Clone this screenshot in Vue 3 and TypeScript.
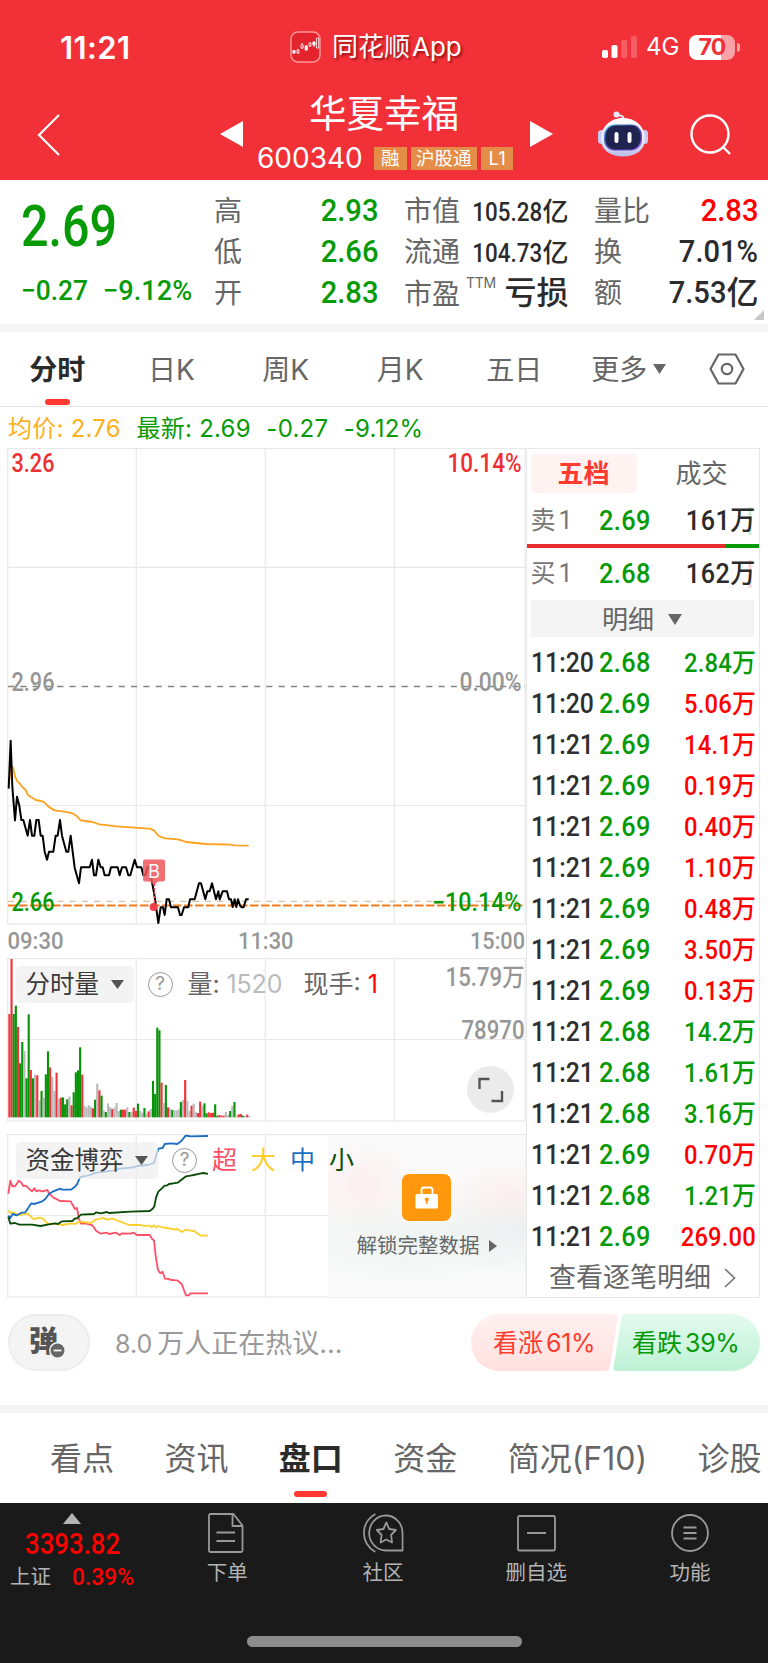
<script setup lang="ts">
type Tone = 'up' | 'down'

interface Trade {
  time: string
  price: string
  volume: string
  tone: Tone
}

const trade = (time: string, price: string, volume: string, tone: Tone): Trade => ({ time, price, volume, tone })

const trades: Trade[] = [
  trade('11:20', '2.68', '2.84万', 'down'),
  trade('11:20', '2.69', '5.06万', 'up'),
  trade('11:21', '2.69', '14.1万', 'up'),
  trade('11:21', '2.69', '0.19万', 'up'),
  trade('11:21', '2.69', '0.40万', 'up'),
  trade('11:21', '2.69', '1.10万', 'up'),
  trade('11:21', '2.69', '0.48万', 'up'),
  trade('11:21', '2.69', '3.50万', 'up'),
  trade('11:21', '2.69', '0.13万', 'up'),
  trade('11:21', '2.68', '14.2万', 'down'),
  trade('11:21', '2.68', '1.61万', 'down'),
  trade('11:21', '2.68', '3.16万', 'down'),
  trade('11:21', '2.69', '0.70万', 'up'),
  trade('11:21', '2.68', '1.21万', 'down'),
  trade('11:21', '2.69', '269.00', 'up'),
]

const periods = ['分时', '日K', '周K', '月K', '五日']
const sections = ['看点', '资讯', '盘口', '资金', '简况(F10)', '诊股']

// One token per minute: colour code (r/g/n) followed by the bar height in thirds of a pixel.
const volumeData =
  'r310 r475 g310 g335 r271 g162 g226 n199 g117 g309 r142 g117 n128 r126 n51 g79 n59 g129 g198 r150 n121 n79 r134 n56 r59 g60 g39 g54 n62 r36 g75 g135 g141 g210 r128 n34 n30 n36 n32 r27 g53 n101 r81 g65 n21 g16 n42 n31 r25 n29 n43 n19 g23 r23 r23 n30 g16 n16 r29 r19 g41 n19 n14 g28 n12 r18 n25 g109 g70 g269 g261 r104 n43 g97 r30 n26 g22 n21 n21 n24 g46 n52 r112 n49 n19 r35 n41 n15 r13 r47 n35 g42 g12 r15 r13 r14 g39 g5 r7 r5 r5 n16 n7 g19 n34 g46 n5 r9 r10 g5 n4 r8 n4'
const barColors: Record<string, string> = { r: '#f0333a', g: '#089408', n: '#b9b9b9' }
const bars = volumeData.split(' ').map((token, i) => {
  const height = Number(token.slice(1))
  return { x: 25 + i * 6.43, y: 592 - height, height, color: barColors[token[0]] }
})

const pricePath =
  'M26 266L32 122L37 260L45 361L51 290L58 317L64 360L70 360L83 407L90 360L96 407L103 407L109 360L116 360L122 407L128 407L134 455L141 479L147 455L160 455L167 407L173 407L180 360L186 407L199 455L205 455L212 407L218 455L224 503L237 550L243 502L269 502L276 479L282 526L288 526L295 479L302 502L308 502L314 526L327 526L333 502L353 502L359 526L366 502L378 502L385 526L391 526L404 479L411 502L424 502L430 526L436 526L443 502L449 502L455 540L464 590L468 620L475 669L482 622L489 622L494 645L500 598L507 598L513 622L534 622L540 645L545 645L552 622L565 622L570 598L584 598L597 550L603 550L616 598L622 574L629 574L636 550L648 598L655 574L659 598L668 574L681 574L687 598L693 598L698 621L704 598L709 621L714 598L720 616L725 622L731 622L738 598L746 598'
const averagePath =
  'M27 245L34 198L40 205L45 230L52 244L59 250L67 261L77 270L83 284L94 292L107 300L128 304L135 309L145 320L164 331L193 335L218 340L230 348L242 361L278 366L298 373L350 379L402 383L449 386L462 391L469 400L476 408L495 415L533 418L544 421L558 426L617 432L693 434L703 436L746 437'

const superPath =
  'M25 206L31 167L37 184L46 183L56 167L64 173L70 183L77 182L96 199L103 190L109 199L116 196L128 199L142 195L148 207L161 218L180 228L212 229L225 252L231 249L237 282L243 296L258 295L277 301L289 318L302 326L321 323L327 327L347 323L359 330L366 325L391 326L401 323L411 330L449 330L455 340L462 347L468 400L474 435L481 445L488 440L495 461L507 462L513 465L532 466L545 477L558 511L566 511L571 505L624 505'
const largePath =
  'M25 257L32 264L38 262L56 270L83 266L95 277L101 283L116 278L128 280L142 295L160 296L187 300L214 295L226 297L238 290L273 294L288 283L302 281L308 278L320 284L339 281L359 289L388 300L423 300L431 303L449 302L455 306L462 301L468 307L475 303L487 307L501 309L520 313L533 312L546 321L557 314L571 317L582 318L603 332L624 332'
const mediumPath =
  'M25 272L31 279L38 267L51 271L64 263L76 262L84 250L94 235L102 237L125 230L135 223L147 207L160 199L180 191L186 194L205 194L213 194L223 187L231 178L240 157L249 154L264 152L289 143L340 137L359 131L400 127L411 123L443 120L462 114L469 91L475 71L488 69L494 57L513 55L532 57L543 49L557 32L566 33L571 34L624 33'
const smallPath =
  'M25 275L31 296L45 294L58 299L96 299L121 303L147 298L166 295L174 297L186 289L217 288L225 280L230 281L243 269L282 267L289 262L302 265L321 261L327 264L391 260L449 258L458 251L463 244L468 218L475 200L488 188L494 182L502 181L507 177L520 175L533 173L558 154L571 152L581 150L603 145L611 144L618 146L624 146'
</script>

<template>
  <div class="screen">
    <header class="top">
      <div class="status">
        <span class="clock">11:21</span>
        <div class="app-name">
          <svg width="31" height="32" viewBox="0 0 31 32">
            <rect x="1" y="1" width="29" height="30" rx="7" fill="#e3242c" stroke="#ff9696" stroke-width="1.5" />
            <g fill="#fff" stroke="#fff">
              <path d="M4 19v4M8 18v5M12 12v6M16 14v6M20 11v5M24 10v6M28 7v6" stroke-width="1" />
              <path d="M2.800 19.500h2.400v2.500h-2.400zM15 15h2.500v4H15zM22.800 11h2.400v3h-2.400z" stroke-width=".6" />
              <path d="M7 19h2v3H7zM11 14h2.200v3H11zM19 12h2v3h-2zM26.500 7h2.200v10h-2.200z" fill="#e3242c" stroke-width=".8" />
            </g>
          </svg>
          <span>同花顺<i>App</i></span>
        </div>
        <div class="signal">
          <svg width="36" height="24" viewBox="0 0 36 24">
            <rect x="0" y="15" width="6" height="8" rx="1.800" fill="#fff" />
            <rect x="9.500" y="10" width="6" height="13" rx="1.800" fill="#fff" />
            <rect x="19.300" y="5" width="6" height="18" rx="1.800" fill="#fff" opacity=".22" />
            <rect x="29" y="1" width="6" height="22" rx="1.800" fill="#fff" opacity=".22" />
          </svg>
          <span class="net">4G</span>
          <span class="battery">70</span>
          <span class="nub"></span>
        </div>
      </div>
      <div class="titlebar">
        <svg class="back" width="24" height="42" viewBox="0 0 24 42" fill="none" stroke="#fff" stroke-width="2.200">
          <path d="M22 1L2 21L22 41" />
        </svg>
        <svg class="prev" width="23" height="26" viewBox="0 0 23 26"><path d="M23 0V26L0 13Z" fill="#fff" /></svg>
        <div class="name">
          <h1>华夏幸福</h1>
          <div class="code-row">
            <span class="code">600340</span><em>融</em><em>沪股通</em><em>L1</em>
          </div>
        </div>
        <svg class="next" width="23" height="26" viewBox="0 0 23 26"><path d="M0 0V26L23 13Z" fill="#fff" /></svg>
        <svg class="robot" width="50" height="46" viewBox="0 0 50 46">
          <defs>
            <linearGradient id="shell" x1="0" y1="0" x2="0" y2="1">
              <stop offset="0" stop-color="#fff" /><stop offset=".6" stop-color="#e6e5fa" /><stop offset="1" stop-color="#b9bbe8" />
            </linearGradient>
            <linearGradient id="visor" x1="0" y1="0" x2="1" y2="1">
              <stop offset="0" stop-color="#52c8e8" /><stop offset=".45" stop-color="#3b45a6" /><stop offset="1" stop-color="#9a54e0" />
            </linearGradient>
          </defs>
          <path d="M25 9C26 4 23 5 20 4" fill="none" stroke="#dcdcf5" stroke-width="2.200" />
          <circle cx="18.500" cy="3.500" r="3" fill="#e9e8fb" />
          <rect x="0" y="19" width="8" height="14" rx="3.500" fill="#c9caf0" />
          <rect x="42" y="19" width="8" height="14" rx="3.500" fill="#c9caf0" />
          <path d="M25 7C38 7 47 16 47 28C47 39 38 45.500 25 45.500S3 39 3 28C3 16 12 7 25 7Z" fill="url(#shell)" />
          <rect x="6" y="13.500" width="38" height="26" rx="11" fill="url(#visor)" />
          <rect x="7.500" y="14.500" width="35" height="24" rx="10" fill="#1e2350" />
          <rect x="16.500" y="21" width="4" height="11" rx="2" fill="#fff" />
          <rect x="29.500" y="21" width="4" height="11" rx="2" fill="#fff" />
        </svg>
        <svg class="search" width="42" height="42" viewBox="0 0 42 42" fill="none" stroke="#fff" stroke-width="2.400">
          <circle cx="20" cy="20" r="18.500" /><path d="M33 33L40 40" />
        </svg>
      </div>
    </header>

    <section class="quote">
      <div class="last">
        <div class="price"><span class="din">2.69</span></div>
        <div class="change"><span class="din">−0.27</span><span class="din">−9.12%</span></div>
      </div>
      <dl class="col col-a">
        <div><dt>高</dt><dd class="down"><span class="din">2.93</span></dd></div>
        <div><dt>低</dt><dd class="down"><span class="din">2.66</span></dd></div>
        <div><dt>开</dt><dd class="down"><span class="din">2.83</span></dd></div>
      </dl>
      <dl class="col col-b">
        <div><dt>市值</dt><dd class="cap"><span class="din">105.28</span>亿</dd></div>
        <div><dt>流通</dt><dd class="cap"><span class="din">104.73</span>亿</dd></div>
        <div><dt>市盈<sup>TTM</sup></dt><dd>亏损</dd></div>
      </dl>
      <dl class="col col-c">
        <div><dt>量比</dt><dd class="up"><span class="din">2.83</span></dd></div>
        <div><dt>换</dt><dd><span class="din">7.01%</span></dd></div>
        <div><dt>额</dt><dd><span class="din">7.53</span>亿</dd></div>
      </dl>
      <svg class="corner" width="10" height="10"><path d="M10 0V10H0Z" fill="#c8c8c8" /></svg>
    </section>

    <nav class="periods">
      <span v-for="(p, i) in periods" :key="p" :class="{ active: i === 0 }">{{ p }}</span>
      <span class="more">更多<svg width="13" height="10"><path d="M0 0H13L6.500 10Z" fill="#666" /></svg></span>
      <svg class="gear" width="36" height="32" viewBox="0 0 36 32" fill="none" stroke="#666" stroke-width="2.200">
        <path d="M9.500 1.500H26.500L34.500 16L26.500 30.500H9.500L1.500 16Z" stroke-linejoin="round" /><circle cx="18" cy="16" r="5.200" />
      </svg>
    </nav>

    <div class="averages">
      <span class="avg">均价: 2.76</span><span>最新: 2.69</span><span>-0.27</span><span>-9.12%</span>
    </div>

    <main class="board">
      <div class="charts">
        <svg class="price-chart" width="526" height="510" viewBox="0 448 526 510">
          <g stroke="#e8e8e8" stroke-width="1.200" fill="none">
            <rect x="7.700" y="448.500" width="517.300" height="475.500" />
            <path d="M136.300 448V924M265.300 448V924M394.300 448V924M8 567.300H525M8 805.500H525" />
          </g>
          <path d="M8 686.500H525" stroke="#858585" stroke-width="1.300" stroke-dasharray="6.200 6.100" />
          <path d="M8 901.300H525" stroke="#dcc09a" stroke-width="1.300" stroke-dasharray="6.200 6.100" />
          <path d="M8 905.500H525" stroke="#f57c1c" stroke-width="1.800" stroke-dasharray="8.500 2.500" />
          <g transform="translate(0 700) scale(.33333)" fill="none" stroke-linejoin="round">
            <path :d="averagePath" stroke="#ffa11f" stroke-width="5.500" />
            <path :d="pricePath" stroke="#000" stroke-width="6" />
          </g>
          <path d="M154.500 884V906" stroke="#f04a50" stroke-width="1.600" stroke-dasharray="2 2" />
          <circle cx="153.700" cy="907" r="4" fill="#f04048" />
          <path d="M145 859.500h18a2 2 0 0 1 2 2v18a2 2 0 0 1-2 2h-5l-4 4l-4-4h-5a2 2 0 0 1-2-2v-18a2 2 0 0 1 2-2z" fill="#f0565c" opacity=".85" />
          <text x="148" y="878" textLength="12" lengthAdjust="spacingAndGlyphs" class="marker">B</text>
          <g class="axis">
            <text x="11.500" y="472" textLength="43" lengthAdjust="spacingAndGlyphs" fill="#ee2f33">3.26</text>
            <text x="11.500" y="691" textLength="43" lengthAdjust="spacingAndGlyphs">2.96</text>
            <text x="11.500" y="910.500" textLength="43" lengthAdjust="spacingAndGlyphs" fill="#069a06">2.66</text>
            <g text-anchor="end">
              <text x="521.500" y="472" textLength="74" lengthAdjust="spacingAndGlyphs" fill="#ee2f33">10.14%</text>
              <text x="521.500" y="691" textLength="62" lengthAdjust="spacingAndGlyphs">0.00%</text>
              <text x="521.500" y="910.500" textLength="89.500" lengthAdjust="spacingAndGlyphs" fill="#069a06">−10.14%</text>
            </g>
            <g class="time">
              <text x="7.500" y="948.500" textLength="56" lengthAdjust="spacingAndGlyphs">09:30</text>
              <text x="238" y="948.500" textLength="55.500" lengthAdjust="spacingAndGlyphs">11:30</text>
              <text x="525" y="948.500" textLength="55" lengthAdjust="spacingAndGlyphs" text-anchor="end">15:00</text>
            </g>
          </g>
        </svg>

        <div class="pane">
          <svg width="526" height="164" viewBox="0 958 526 164">
            <g stroke="#e8e8e8" stroke-width="1.200" fill="none">
              <rect x="7.700" y="958.600" width="517.300" height="162.500" />
              <path d="M136.300 958V1121M265.300 958V1121M394.300 958V1121M8 1039.500H525" />
            </g>
            <g transform="translate(0 920) scale(.33333)">
              <rect v-for="(b, i) in bars" :key="i" :x="b.x" :y="b.y" width="6.430" :height="b.height" :fill="b.color" />
            </g>
            <g class="axis" text-anchor="end">
              <text x="524.500" y="985.500" textLength="79" lengthAdjust="spacingAndGlyphs">15.79万</text>
              <text x="524.500" y="1038.500" textLength="63" lengthAdjust="spacingAndGlyphs">78970</text>
            </g>
          </svg>
          <div class="legend">
            <span class="drop">分时量<svg width="13" height="9"><path d="M0 0H13L6.500 9Z" fill="#555" /></svg></span>
            <span class="help">?</span>
            <span class="vol">量: <b>1520</b></span>
            <span class="hand">现手: <b>1</b></span>
          </div>
          <svg class="expand" width="47" height="47" viewBox="0 0 47 47">
            <circle cx="23.500" cy="23.500" r="23.500" fill="#ebebeb" />
            <path d="M12.500 23V13H22.500M35 25V35H24.500" fill="none" stroke="#555" stroke-width="2.400" />
          </svg>
        </div>

        <div class="pane funds">
          <svg width="526" height="164" viewBox="0 1134 526 164">
            <g stroke="#e8e8e8" stroke-width="1.200" fill="none">
              <rect x="7.700" y="1134.600" width="517.300" height="162.500" />
              <path d="M136.300 1134V1297M265.300 1134V1297M8 1215.500H328" />
            </g>
            <g transform="translate(0 1125) scale(.33333)" fill="none" stroke-width="5.500" stroke-linejoin="round">
              <path :d="superPath" stroke="#ff5068" />
              <path :d="largePath" stroke="#fbd02c" />
              <path :d="mediumPath" stroke="#1b6fc2" />
              <path :d="smallPath" stroke="#084a08" />
            </g>
          </svg>
          <div class="locked">
            <svg width="49" height="47" viewBox="0 0 49 47">
              <rect width="49" height="47" rx="7" fill="#ff980c" />
              <rect x="13.500" y="20" width="22.500" height="14.500" rx="1.500" fill="#fff" />
              <path d="M19.500 21V16q0-2.500 2.500-2.500h6q2.500 0 2.500 2.500V21" fill="none" stroke="#fff" stroke-width="1.800" />
              <circle cx="24.800" cy="25.500" r="2" fill="#ff980c" /><path d="M24.800 26V30" stroke="#ff980c" stroke-width="1.600" />
            </svg>
            <p>解锁完整数据<svg width="8" height="12"><path d="M0 0L8 6L0 12Z" fill="#666" /></svg></p>
          </div>
          <div class="legend">
            <span class="drop">资金博弈<svg width="13" height="9"><path d="M0 0H13L6.500 9Z" fill="#555" /></svg></span>
            <span class="help">?</span>
            <span class="s1">超</span><span class="s2">大</span><span class="s3">中</span><span class="s4">小</span>
          </div>
        </div>
      </div>

      <aside class="depth">
        <div class="switch"><span class="on">五档</span><span>成交</span></div>
        <div class="level ask"><span class="side">卖1</span><span class="px">2.69</span><span class="qty">161万</span></div>
        <div class="ratio"><i></i></div>
        <div class="level bid"><span class="side">买1</span><span class="px">2.68</span><span class="qty">162万</span></div>
        <div class="detail">明细<svg width="14" height="11"><path d="M0 0H14L7 11Z" fill="#666" /></svg></div>
        <ul>
          <li v-for="(t, i) in trades" :key="i">
            <span class="tm">{{ t.time }}</span><span class="px">{{ t.price }}</span><span class="qty" :class="t.tone">{{ t.volume }}</span>
          </li>
        </ul>
        <div class="all">
          查看逐笔明细<svg width="12" height="20" viewBox="0 0 12 20" fill="none" stroke="#777" stroke-width="1.700"><path d="M1 1L10.500 10L1 19" /></svg>
        </div>
      </aside>
    </main>

    <section class="talk">
      <span class="danmu">弹<svg width="17" height="17"><circle cx="8.500" cy="8.500" r="7.700" fill="#666" stroke="#f4f4f4" stroke-width="1.500" /><path d="M4.500 8.500H12.500" stroke="#f4f4f4" stroke-width="1.800" /></svg></span>
      <span class="topic"><i>8.0</i>万人正在热议...</span>
      <div class="vote">
        <svg width="289" height="57" viewBox="0 0 289 57">
          <defs>
            <linearGradient id="bull" x1="0" y1="0" x2="0" y2="1"><stop offset="0" stop-color="#fff1f0" /><stop offset="1" stop-color="#ffe0de" /></linearGradient>
            <linearGradient id="bear" x1="0" y1="0" x2="0" y2="1"><stop offset="0" stop-color="#e4fbef" /><stop offset="1" stop-color="#bdf1d5" /></linearGradient>
          </defs>
          <path d="M28.500 0H144Q147.500 0 147 3.500L138.500 53.500Q138 57 134.500 57H28.500A28.500 28.500 0 0 1 28.500 0Z" fill="url(#bull)" />
          <path d="M155 0H260.500A28.500 28.500 0 0 1 260.500 57H145.500Q142 57 142.500 53.500L150.500 3.500Q151.500 0 155 0Z" fill="url(#bear)" />
        </svg>
        <span class="bull">看涨<i>61%</i></span>
        <span class="bear">看跌<i>39%</i></span>
      </div>
    </section>

    <nav class="sections">
      <span v-for="s in sections" :key="s" :class="{ active: s === '盘口' }">{{ s }}</span>
    </nav>

    <footer>
      <div class="index">
        <svg width="18" height="11"><path d="M9 0L18 11H0Z" fill="#b4b4b4" /></svg>
        <strong><span class="din">3393.82</span></strong>
        <p>上证<span class="din">0.39%</span></p>
      </div>
      <div class="tool">
        <svg width="38" height="40" viewBox="0 0 38 40">
          <path d="M2.500 1H25.500L34.500 12.500V37.500a1.500 1.500 0 0 1-1.500 1.500H2.500A1.500 1.500 0 0 1 1 37.500V2.500A1.500 1.500 0 0 1 2.500 1ZM24.500 1V13H34.500M8.500 19.500H27M8.500 28H27" />
        </svg>
        下单
      </div>
      <div class="tool community">
        <svg width="42" height="40" viewBox="0 0 44 40" preserveAspectRatio="none">
          <path d="M14 1C7 5 2 12 2 20S7 35 14 39M42 37.500H25.500A17.500 17.500 0 1 1 42.500 20V37.500ZM25.500 9.500L28.500 16L35.500 17L30.500 22L31.500 29.500L25.500 26.500L19.500 29.500L20.500 22L15.500 17L22.500 16Z" />
        </svg>
        社区
      </div>
      <div class="tool watch">
        <svg width="40" height="40" viewBox="0 0 40 40">
          <path d="M3.500 3H37.500Q39 3 39 4.500V36Q39 37.500 37.500 37.500H3.500Q2 37.500 2 36V4.500Q2 3 3.500 3ZM11 20H30" />
        </svg>
        删自选
      </div>
      <div class="tool">
        <svg width="40" height="40" viewBox="0 0 40 40">
          <circle cx="20" cy="20" r="18" /><path d="M13.500 14.500H26.500M13.500 20H26.500M13.500 25.500H26.500" />
        </svg>
        功能
      </div>
      <div class="home"></div>
    </footer>
  </div>
</template>

<style>
body {
  margin: 0;
  background: #fff;
}
</style>

<style scoped>
* {
  box-sizing: border-box;
}
.screen {
  width: 768px;
  height: 1663px;
  overflow: hidden;
  background: #fff;
  color: #666;
  font-family: Inter, 'Noto Sans CJK SC', sans-serif;
  font-weight: 400;
}
svg {
  display: block;
  flex: none;
  overflow: visible;
}
i,
em {
  font-style: normal;
}
dl,
dd,
p,
ul,
h1 {
  margin: 0;
  padding: 0;
}
span {
  white-space: nowrap;
}
.din {
  display: inline-block;
  font-family: Roboto, 'Noto Sans CJK SC', sans-serif;
  transform: scaleX(0.91);
  transform-origin: right center;
}
.up {
  color: #f00;
}
.down {
  color: #069a06;
}

/* header */
.top {
  height: 180px;
  background: #f13038;
  color: #fff;
}
.status {
  display: flex;
  height: 94px;
  padding: 0 28px 0 60px;
  align-items: center;
}
.clock {
  width: 230px;
  flex: none;
  font-size: 31px;
  font-weight: 600;
  letter-spacing: 0.4px;
}
.app-name {
  display: flex;
  width: 312px;
  flex: none;
  gap: 11px;
  align-items: center;
  font-size: 26px;
  text-shadow: 2px 2px 2px rgba(90, 0, 0, 0.55);
}
.app-name span {
  height: 32px;
  line-height: 32px;
}
.app-name i {
  margin-left: 2px;
}
.signal {
  display: flex;
  flex: none;
  align-items: center;
}
.net {
  width: 42px;
  margin-right: 9px;
  padding-left: 8px;
  font-size: 24px;
  line-height: 26px;
}
.battery {
  width: 46px;
  height: 25px;
  border-radius: 8px;
  background: linear-gradient(90deg, #fff 69%, #f9a3a8 69%);
  color: #f13038;
  font-size: 23px;
  font-weight: 700;
  line-height: 25px;
  text-align: center;
  letter-spacing: -0.7px;
}
.nub {
  width: 3px;
  height: 9px;
  margin-left: 2px;
  border-radius: 0 4px 4px 0;
  background: #f9a3a8;
}
.titlebar {
  display: flex;
  height: 86px;
  padding-left: 37px;
}
.back {
  margin-top: 20px;
}
.prev {
  margin: 27px 0 0 159px;
}
.name {
  width: 287px;
  text-align: center;
}
h1 {
  height: 44px;
  font-size: 37.500px;
  font-weight: 400;
  line-height: 39px;
  text-indent: -5px;
}
.code-row {
  display: flex;
  height: 40px;
  padding-left: 14px;
  gap: 4px;
  align-items: center;
}
.code {
  width: 113px;
  font-size: 28px;
  text-align: left;
  line-height: 36px;
}
em {
  height: 23px;
  padding: 0 5.500px;
  background: #e38d48;
  font-size: 18.500px;
  line-height: 23px;
  white-space: nowrap;
}
em:first-of-type {
  padding: 0 7px;
}
em:last-child {
  padding: 0 7.500px;
}
.next {
  margin-top: 27px;
}
.robot {
  margin: 17px 0 0 45px;
}
.search {
  margin: 20px 0 0 42px;
}

/* quote */
.quote {
  position: relative;
  display: flex;
  height: 152px;
  padding-top: 10px;
  border-bottom: 8px solid #f4f4f4;
}
.last {
  width: 214px;
  padding-left: 21px;
  color: #069a06;
}
.last .din {
  transform-origin: left center;
}
.price {
  height: 73px;
  font-size: 57px;
  font-weight: 500;
  line-height: 72px;
}
.price .din {
  transform: scaleX(0.85);
}
.change {
  display: flex;
  font-size: 28px;
  font-weight: 500;
  line-height: 56px;
}
.change .din {
  transform: scaleX(0.94);
}
.change .din:first-child {
  width: 82px;
}
.change .din:last-child {
  transform: scaleX(0.97);
}
.col {
  width: 164px;
}
.col .din {
  margin-top: -3px;
  line-height: 38px;
  vertical-align: 1px;
}
.col-b {
  width: 164.500px;
  margin-left: 26px;
}
.col-b .din {
  transform: scaleX(0.86);
}
.col-c {
  width: 164.500px;
  margin-left: 25.500px;
}
.col > div {
  display: flex;
  height: 41px;
  justify-content: space-between;
  align-items: center;
}
dt {
  display: flex;
  padding-top: 2px;
  font-size: 28px;
  line-height: 41px;
}
.col-b > div:last-child dt {
  padding-top: 4px;
}
sup {
  margin: 1px 0 0 6px;
  font-size: 14px;
  line-height: 16px;
  letter-spacing: -0.3px;
}
dd {
  height: 38px;
  font-size: 32px;
  font-weight: 500;
  line-height: 38px;
  white-space: nowrap;
  color: #2b2b2b;
}
dd.down {
  color: #069a06;
}
dd.up {
  color: #f00;
}
dd.cap {
  font-size: 26px;
  line-height: 40px;
}
.cap .din {
  vertical-align: baseline;
}
.corner {
  position: absolute;
  right: 4px;
  bottom: 4px;
}

/* period tabs */
.periods {
  display: flex;
  height: 75px;
  align-items: stretch;
  border-bottom: 1px solid #e6e6e6;
  font-size: 28px;
  line-height: 76px;
  text-align: center;
}
.periods > span {
  width: 114.300px;
  flex: none;
}
.active {
  position: relative;
  color: #2b2b2b;
  font-weight: 600;
}
.active::after {
  content: '';
  position: absolute;
  bottom: 1px;
  left: 50%;
  width: 25px;
  height: 6px;
  margin-left: -12.500px;
  border-radius: 3px;
  background: #ff3830;
}
.more {
  display: flex;
  padding-top: 1px;
  gap: 6px;
  justify-content: center;
  align-items: center;
}
.more svg {
  margin-bottom: 2px;
}
.gear {
  margin: 21px 0 0 23.500px;
}
.averages {
  display: flex;
  height: 41px;
  padding-left: 8px;
  gap: 15.500px;
  font-size: 24px;
  line-height: 43px;
  letter-spacing: 0.25px;
  color: #069a06;
}
.avg {
  color: #fdb01e;
}

/* charts */
.board {
  display: flex;
  height: 850px;
}
.charts {
  width: 526px;
}
.axis {
  font: 500 25px Roboto, 'Noto Sans CJK SC', sans-serif;
  fill: #969696;
}
.axis .time {
  font-size: 23.500px;
}
.marker {
  font-size: 18px;
  fill: #fff;
}
.pane {
  position: relative;
  height: 176px;
}
.legend {
  position: absolute;
  top: 8px;
  left: 15.500px;
  display: flex;
  height: 37px;
  align-items: center;
  font-size: 25px;
  line-height: 37px;
}
.legend b {
  font-weight: 400;
}
.drop {
  display: flex;
  gap: 11.500px;
  padding: 0 10px;
  align-items: center;
  border-radius: 5px;
  background: rgba(238, 238, 238, 0.72);
  color: #3a3a3a;
  font-size: 24.500px;
  line-height: 37px;
}
.help {
  width: 25px;
  height: 25px;
  margin: 0 15px 0 14px;
  border: 1.800px solid #999;
  border-radius: 50%;
  color: #999;
  font-size: 19px;
  line-height: 22px;
  text-align: center;
}
.vol {
  letter-spacing: -0.1px;
}
.vol b {
  color: #bbb;
}
.hand {
  margin-left: 21px;
}
.hand b {
  color: #f00;
}
.expand {
  position: absolute;
  top: 108px;
  left: 467px;
}
.s1,
.s2,
.s3,
.s4 {
  width: 39px;
}
.funds .help {
  margin-right: 15px;
}
.s1 {
  color: #ff5068;
}
.s2 {
  color: #fbd02c;
}
.s3 {
  color: #1b6fc2;
}
.s4 {
  color: #084a08;
}
.locked {
  position: absolute;
  top: 1px;
  left: 328px;
  display: flex;
  width: 197px;
  height: 162px;
  padding-top: 39px;
  flex-direction: column;
  align-items: center;
  background: radial-gradient(60px 45px at 35px 50px, rgba(255, 228, 228, 0.5), transparent),
    radial-gradient(80px 35px at 185px 60px, rgba(255, 228, 228, 0.45), transparent),
    radial-gradient(130px 45px at 80px 105px, rgba(226, 238, 233, 0.55), transparent),
    radial-gradient(90px 45px at 190px 95px, rgba(230, 236, 236, 0.7), transparent), #fafafa;
}
.locked p {
  display: flex;
  gap: 9px;
  align-items: center;
  font-size: 20.500px;
  line-height: 49px;
}

/* order book */
.depth {
  width: 234.500px;
  height: 850px;
  margin-left: -0.500px;
  border: 1.200px solid #e8e8e8;
  padding-left: 4px;
}
.switch {
  display: flex;
  height: 39px;
  margin: 5px 0 7px;
  font-size: 26px;
  line-height: 40px;
}
.switch span {
  width: 106px;
  text-align: center;
}
.switch span:last-child {
  margin-left: 12px;
}
.switch .on {
  border-radius: 4px;
  background: #fff3f2;
  color: #ff3b30;
  font-weight: 600;
}
.level,
li {
  display: flex;
  padding-top: 1px;
  align-items: center;
  font-family: Roboto, 'Noto Sans CJK SC', sans-serif;
  font-size: 27.500px;
  font-weight: 500;
  line-height: 40px;
}
.level {
  height: 40px;
  color: #2b2b2b;
}
.bid {
  margin-top: 5px;
}
.side {
  width: 68.500px;
  color: #777;
  font-size: 25px;
  font-weight: 400;
  letter-spacing: 3px;
}
.px {
  width: 60px;
  color: #069a06;
  letter-spacing: 0.4px;
  transform: scaleX(0.92);
  transform-origin: left center;
}
.tm {
  width: 68.500px;
  color: #2f2f2f;
  transform: scaleX(0.9);
  transform-origin: left center;
}
.qty {
  width: 97px;
  text-align: right;
  font-size: 26px;
  letter-spacing: 0.2px;
  transform: scaleX(0.915);
  transform-origin: right center;
}
.level .qty {
  font-size: 27px;
  letter-spacing: 0.6px;
  transform: scaleX(0.93);
}
.ask .qty {
  background: linear-gradient(#c9ecc9, #c9ecc9) 89px 50% / 3px 28px no-repeat;
}
.bid .qty {
  background: linear-gradient(#fcd0d0, #fcd0d0) 89px 50% / 3px 28px no-repeat;
}
.ratio {
  height: 4px;
  margin: 4px 0 0 -4px;
  background: #069a06;
}
.ratio i {
  display: block;
  width: 199px;
  height: 4px;
  background: #e62e30;
}
.detail {
  display: flex;
  width: 223px;
  height: 37px;
  margin-top: 7px;
  padding-top: 1px;
  gap: 14px;
  justify-content: center;
  align-items: center;
  background: #f4f4f4;
  font-size: 26px;
  line-height: 37px;
}
ul {
  margin-top: 5px;
  list-style: none;
}
li {
  height: 41px;
}
.all {
  display: flex;
  height: 40px;
  padding: 2px 0 0 18.500px;
  gap: 13px;
  align-items: center;
  font-size: 27px;
  line-height: 38px;
}

/* discussion */
.talk {
  display: flex;
  height: 115px;
  padding: 16px 8px 0;
  border-bottom: 8px solid #f4f4f4;
}
.danmu {
  position: relative;
  width: 82px;
  height: 57px;
  padding-left: 19px;
  border: 2px solid #ededed;
  border-radius: 29px;
  background: #f4f4f4;
  color: #555;
  font-size: 29px;
  font-weight: 800;
  line-height: 51px;
}
.danmu svg {
  position: absolute;
  top: 26px;
  left: 39px;
}
.topic {
  padding-left: 25px;
  color: #999;
  font-size: 27px;
  line-height: 59px;
}
.topic i {
  margin-right: 5px;
  font-size: 25px;
}
.vote {
  position: relative;
  display: flex;
  width: 289px;
  margin-left: auto;
  font-size: 25px;
  line-height: 59px;
}
.vote > svg {
  position: absolute;
}
.vote span {
  position: relative;
  padding-left: 22px;
}
.vote i {
  margin-left: 3px;
  letter-spacing: -0.3px;
}
.bull {
  width: 139px;
  color: #ff3b30;
}
.bear {
  color: #069a06;
}
.sections {
  display: flex;
  height: 90px;
  padding-left: 50px;
  gap: 50.400px;
  font-size: 32px;
  line-height: 92px;
}
.sections .active::after {
  bottom: 6px;
  width: 33px;
  margin-left: -16.500px;
}

/* footer */
footer {
  position: relative;
  display: flex;
  height: 160px;
  background: #1a1a1a;
  color: #b4b4b4;
}
.index {
  width: 150px;
}
.index > svg {
  margin: 10px 0 0 63px;
}
.index strong {
  display: block;
  margin-left: 24.500px;
  color: #f00;
  font-size: 29px;
  font-weight: 500;
  line-height: 40px;
}
.index .din {
  transform: scaleX(0.89);
  transform-origin: left center;
}
.index p {
  display: flex;
  gap: 21px;
  padding-left: 10px;
  font-size: 20.500px;
  line-height: 25px;
}
.index p .din {
  color: #f00;
  font-size: 24.500px;
  font-weight: 500;
  transform: scaleX(0.93);
}
.tool {
  display: flex;
  width: 154.300px;
  padding-top: 10px;
  flex-direction: column;
  align-items: center;
  font-size: 20.500px;
  line-height: 39px;
}
.community {
  padding-left: 3px;
}
.watch {
  padding-left: 1px;
}
.tool svg {
  fill: none;
  stroke: #999;
  stroke-width: 1.800;
  stroke-linejoin: round;
}
.home {
  position: absolute;
  left: 247px;
  bottom: 16px;
  width: 275px;
  height: 11px;
  border-radius: 6px;
  background: #8c8c8c;
}
</style>
